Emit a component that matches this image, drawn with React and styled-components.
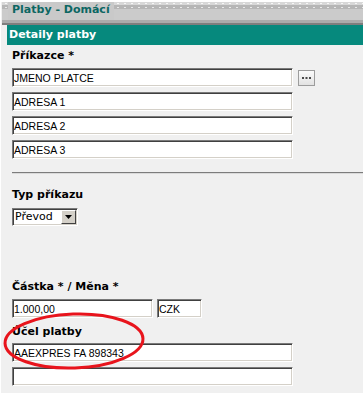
import React from 'react'
import styled, { createGlobalStyle } from 'styled-components'

const GlobalStyle = createGlobalStyle`
  * { box-sizing: border-box; }
  body {
    margin: 0;
    background: #f0f0f0;
  }
`

function App() {
  return (
    <Page>
      <GlobalStyle />
      <TitleBar>
        <Title>Platby - Domácí</Title>
      </TitleBar>
      <Panel>
        <SectionBar>Detaily platby</SectionBar>
        <Body>
          <Label $top={4}>Příkazce *</Label>
          <FieldStack $top={6}>
            <Row>
              <Field $w={281} defaultValue="JMENO PLATCE" readOnly />
              <DotsButton>
                <svg width="9" height="3" viewBox="0 0 9 3">
                  <rect x="0" y="0" width="2" height="2" fill="#4a4a4a" />
                  <rect x="3.5" y="0" width="2" height="2" fill="#4a4a4a" />
                  <rect x="7" y="0" width="2" height="2" fill="#4a4a4a" />
                </svg>
              </DotsButton>
            </Row>
            <Field $w={281} defaultValue="ADRESA 1" readOnly />
            <Field $w={281} defaultValue="ADRESA 2" readOnly />
            <Field $w={281} defaultValue="ADRESA 3" readOnly />
          </FieldStack>
          <Separator />
          <Label $top={14}>Typ příkazu</Label>
          <Select>
            <SelectText>Převod</SelectText>
            <ArrowButton>
              <svg width="7" height="4" viewBox="0 0 7 4">
                <path d="M0 0h7L3.5 4z" fill="#000" />
              </svg>
            </ArrowButton>
          </Select>
          <Label $top={54}>Částka * / Měna *</Label>
          <Row $top={6}>
            <Field $w={141} defaultValue="1.000,00" readOnly />
            <Field $w={45} defaultValue="CZK" readOnly />
          </Row>
          <Label $top={7}>Účel platby</Label>
          <FieldStack $top={5}>
            <Field $w={281} defaultValue="AAEXPRES FA 898343" readOnly />
            <Field $w={281} defaultValue="" readOnly />
          </FieldStack>
        </Body>
      </Panel>
      <Circle width="150" height="64" viewBox="0 0 150 64">
        <ellipse cx="72" cy="31" rx="69" ry="27" transform="rotate(-2 72 31)"
          fill="none" stroke="#e8141c" strokeWidth="3" />
      </Circle>
    </Page>
  )
}

export default App

const Page = styled.div`
  position: relative;
  width: 363px;
  height: 393px;
  overflow: hidden;
  background: #f0f0f0;
  border-top: 2px solid #fff;
  border-left: 1px solid #fff;
  font-family: "DejaVu Sans", Verdana, sans-serif;
`

const TitleBar = styled.div`
  height: 23px;
  margin-left: 1px;
  display: flex;
  align-items: flex-start;
  background:
    repeating-linear-gradient(90deg, transparent 0 3px, rgba(255,255,255,0.8) 3px 5px, transparent 5px 7px) 0 1px / 100% 1px no-repeat,
    repeating-linear-gradient(90deg, transparent 0 3px, rgba(255,255,255,0.7) 3px 5px, transparent 5px 7px) 0 5px / 100% 1px no-repeat,
    linear-gradient(#d8d8d8 0 3px, #b6b6b6 3px 7px, #cbcbcb 7px 18px, #ababab 18px 21px, #7e7e7e 21px 23px);
`

const Title = styled.div`
  margin-left: 6px;
  padding: 1px 4px 0;
  height: 18px;
  background: #c9c9c9;
  color: #0c6662;
  font-size: 11px;
  font-weight: bold;
  line-height: 13px;
`

const Panel = styled.div`
  margin-left: 6px;
`

const SectionBar = styled.div`
  height: 20px;
  padding-left: 2px;
  background: #06897d;
  color: #fff;
  font-size: 11px;
  font-weight: bold;
  line-height: 20px;
`

const Body = styled.div`
  padding-left: 5px;
  display: flex;
  flex-direction: column;
  align-items: flex-start;
`

const Label = styled.div`
  margin-top: ${p => p.$top}px;
  font-size: 11px;
  font-weight: bold;
  line-height: 13px;
  color: #000;
`

const FieldStack = styled.div`
  margin-top: ${p => p.$top}px;
  display: flex;
  flex-direction: column;
  gap: 5px;
`

const Row = styled.div`
  margin-top: ${p => p.$top || 0}px;
  display: flex;
  align-items: center;
  gap: 4px;
`

const Field = styled.input`
  width: ${p => p.$w}px;
  height: 19px;
  margin: 0;
  padding: 0 0 0 1px;
  border: 1px solid;
  border-color: #7a7a7a #fff #fff #7a7a7a;
  box-shadow: inset 1px 1px 0 #404040, inset -1px -1px 0 #d4d0c8;
  background: #fff;
  font-family: "Liberation Sans", Arial, sans-serif;
  font-size: 10.5px;
  color: #000;
  outline: none;
`

const DotsButton = styled.div`
  width: 17px;
  height: 16px;
  margin-left: 1px;
  border: 1px solid #9c9c9c;
  background: linear-gradient(#fbfbfb, #e2e2e2);
  display: flex;
  align-items: flex-end;
  justify-content: center;
  padding-bottom: 5px;
`

const Separator = styled.div`
  align-self: stretch;
  margin-top: 13px;
  border-top: 1px solid #7c7c7c;
  border-bottom: 1px solid #dadada;
`

const Select = styled.div`
  margin-top: 7px;
  width: 66px;
  height: 18px;
  display: flex;
  align-items: stretch;
  border: 1px solid;
  border-color: #7a7a7a #fff #fff #7a7a7a;
  box-shadow: inset 1px 1px 0 #404040, inset -1px -1px 0 #d4d0c8;
  background: #fff;
  padding: 1px;
`

const SelectText = styled.div`
  flex: 1;
  padding-left: 1px;
  font-size: 11px;
  line-height: 14px;
  color: #000;
`

const ArrowButton = styled.div`
  width: 15px;
  background: #d4d0c8;
  border: 1px solid;
  border-color: #fff #404040 #404040 #fff;
  display: flex;
  align-items: center;
  justify-content: center;
`

const Circle = styled.svg`
  position: absolute;
  left: 1px;
  top: 308px;
  pointer-events: none;
`
